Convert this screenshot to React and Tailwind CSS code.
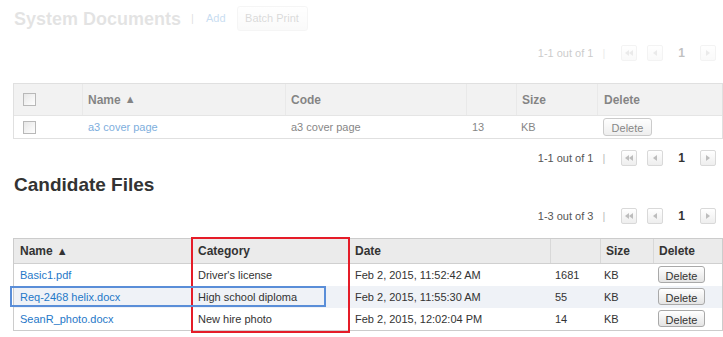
const PagerButton = ({ dir }) => (
    <div className="w-[16px] h-[16px] border border-[#d9d9d9] rounded-[2px] bg-gradient-to-b from-white to-[#eeeeee] flex items-center justify-center">
        <svg width="10" height="8" viewBox="0 0 10 8">
            {dir === 'first' && (
                <>
                    <polygon points="1,4 5,1 5,7" fill="#bdbdbd" />
                    <polygon points="5,4 9,1 9,7" fill="#bdbdbd" />
                </>
            )}
            {dir === 'prev' && <polygon points="3,4 7,1 7,7" fill="#bdbdbd" />}
            {dir === 'next' && <polygon points="7,4 3,1 3,7" fill="#bdbdbd" />}
        </svg>
    </div>
)

const Pager = ({ text, className = '' }) => (
    <div className={`flex items-center justify-end h-[16px] pr-[7px] text-[11px] text-[#555] ${className}`}>
        <span>{text}</span>
        <span className="ml-[9px] text-[#bbb]">|</span>
        <div className="ml-[16px] flex items-center gap-[10px]">
            <PagerButton dir="first" />
            <PagerButton dir="prev" />
        </div>
        <span className="mx-[15px] font-bold text-[#333] text-[12px]">1</span>
        <PagerButton dir="next" />
    </div>
)

const DeleteButton = ({ className = '' }) => (
    <button className={`border border-[#a9a9a9] rounded-[3px] bg-gradient-to-b from-white to-[#e4e4e4] text-[11px] text-[#333] leading-none pt-[3px] ${className}`}>
        Delete
    </button>
)

const Checkbox = () => (
    <div className="w-[13px] h-[13px] border border-[#8a8a8a] bg-gradient-to-br from-[#d8d8d8] to-white" />
)

const files = [
    { name: 'Basic1.pdf', category: "Driver's license", date: 'Feb 2, 2015, 11:52:42 AM', size: '1681' },
    { name: 'Req-2468 helix.docx', category: 'High school diploma', date: 'Feb 2, 2015, 11:55:30 AM', size: '55', hl: true },
    { name: 'SeanR_photo.docx', category: 'New hire photo', date: 'Feb 2, 2015, 12:02:04 PM', size: '14' },
]

export default function App() {
    return (
        <div className="w-[723px] h-[337px] overflow-hidden bg-white font-['Liberation_Sans',Arial,sans-serif] text-[11px] text-[#333]">
            {/* System documents (faded) */}
            <div className="flex items-center h-[31px] pt-[6px] pl-[14px]">
                <h2 className="text-[18px] font-bold text-[#333] opacity-[0.13] leading-none">System Documents</h2>
                <span className="ml-[10px] text-[#333] opacity-[0.15]">|</span>
                <a className="ml-[12px] text-[#1f78c8] opacity-[0.25]">Add</a>
                <button className="ml-[11px] w-[71px] h-[25px] border border-[#ccc] rounded-[3px] bg-gradient-to-b from-white to-[#e6e6e6] text-[11px] text-[#333] opacity-[0.18]">
                    Batch Print
                </button>
            </div>

            <Pager text="1-1 out of 1" className="mt-[14px] opacity-[0.3]" />

            <div className="mt-[22px] ml-[13px] w-[710px] border border-[#ccc] opacity-[0.6]">
                <div className="grid grid-cols-[68px_203px_181px_50px_81px_1fr] h-[32px] bg-[#ebebeb] border-b border-[#d5d5d5] text-[12px] font-bold text-[#333]">
                    <div className="flex items-center pl-[9px]"><Checkbox /></div>
                    <div className="flex items-center px-[5px] border-l border-[#dcdcdc]">Name <span className="ml-[4px] text-[11px]">▲</span></div>
                    <div className="flex items-center px-[5px] border-l border-[#dcdcdc]">Code</div>
                    <div className="border-l border-[#dcdcdc]" />
                    <div className="flex items-center px-[5px] border-l border-[#dcdcdc]">Size</div>
                    <div className="flex items-center px-[6px] border-l border-[#dcdcdc]">Delete</div>
                </div>
                <div className="grid grid-cols-[68px_203px_181px_50px_81px_1fr] h-[22px] items-center">
                    <div className="pl-[9px]"><Checkbox /></div>
                    <a className="px-[6px] text-[#1f78c8]">a3 cover page</a>
                    <div className="px-[6px]">a3 cover page</div>
                    <div className="px-[6px]">13</div>
                    <div className="px-[5px]">KB</div>
                    <div className="px-[6px]"><DeleteButton className="w-[49px] h-[18px]" /></div>
                </div>
            </div>

            <Pager text="1-1 out of 1" className="mt-[11px]" />

            <h2 className="mt-[8px] pl-[14px] h-[22px] leading-[22px] text-[19px] font-bold text-[#333]">Candidate Files</h2>

            <Pager text="1-3 out of 3" className="mt-[12px]" />

            <div className="relative mt-[14px] ml-[13px] w-[710px]">
                <div className="border border-[#ccc]">
                    <div className="grid grid-cols-[177px_158px_201px_50px_53px_1fr] h-[25px] bg-[#ebebeb] border-b border-[#d0d0d0] text-[12px] font-bold text-[#333]">
                        <div className="flex items-center px-[6px]">Name <span className="ml-[4px] text-[11px]">▲</span></div>
                        <div className="flex items-center px-[6px] border-l border-[#d8d8d8]">Category</div>
                        <div className="flex items-center px-[5px] border-l border-[#d8d8d8]">Date</div>
                        <div className="border-l border-[#d8d8d8]" />
                        <div className="flex items-center px-[5px] border-l border-[#d8d8d8]">Size</div>
                        <div className="flex items-center px-[5px] border-l border-[#d8d8d8]">Delete</div>
                    </div>
                    {files.map((f) => (
                        <div
                            key={f.name}
                            className={`grid grid-cols-[177px_158px_201px_50px_53px_1fr] h-[22px] items-center ${f.hl ? 'bg-[#eff2f7]' : ''}`}
                        >
                            <a className="px-[6px] text-[#1f78c8]">{f.name}</a>
                            <div className="px-[7px]">{f.category}</div>
                            <div className="px-[6px]">{f.date}</div>
                            <div className="px-[5px]">{f.size}</div>
                            <div className="px-[4px]">KB</div>
                            <div className="pl-[5px]"><DeleteButton className="w-[47px] h-[17px]" /></div>
                        </div>
                    ))}
                </div>

                {/* annotation boxes */}
                <div className="absolute left-[178px] top-[-1px] w-[159px] h-[96px] border-2 border-[#e51c28]" />
                <div className="absolute left-[-3px] top-[48px] w-[316px] h-[21px] border-2 border-[#5a8ed8]" />
            </div>
        </div>
    )
}
